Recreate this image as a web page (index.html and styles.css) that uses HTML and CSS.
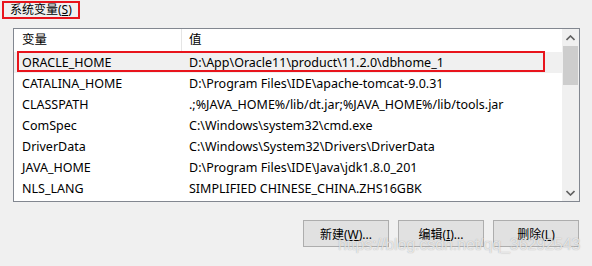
FILE: index.html
```html
<!DOCTYPE html>
<html lang="zh-CN">
<head>
    <meta charset="UTF-8">
    <title>系统变量</title>
    <link rel="stylesheet" href="styles.css">
</head>
<body>
    <div class="panel">
        <div class="group-title"><span class="title-box">系统变量(<u>S</u>)</span></div>
        <div class="list-box">
            <div class="list-body">
                <div class="list-head">
                    <div class="col-name">变量</div>
                    <div class="col-value">值</div>
                </div>
                <div class="row selected">
                    <div class="col-name">ORACLE_HOME</div>
                    <div class="col-value">D:\App\Oracle11\product\11.2.0\dbhome_1</div>
                </div>
                <div class="row">
                    <div class="col-name">CATALINA_HOME</div>
                    <div class="col-value">D:\Program Files\IDE\apache-tomcat-9.0.31</div>
                </div>
                <div class="row">
                    <div class="col-name">CLASSPATH</div>
                    <div class="col-value">.;%JAVA_HOME%/lib/dt.jar;%JAVA_HOME%/lib/tools.jar</div>
                </div>
                <div class="row">
                    <div class="col-name">ComSpec</div>
                    <div class="col-value">C:\Windows\system32\cmd.exe</div>
                </div>
                <div class="row">
                    <div class="col-name">DriverData</div>
                    <div class="col-value">C:\Windows\System32\Drivers\DriverData</div>
                </div>
                <div class="row">
                    <div class="col-name">JAVA_HOME</div>
                    <div class="col-value">D:\Program Files\IDE\Java\jdk1.8.0_201</div>
                </div>
                <div class="row">
                    <div class="col-name">NLS_LANG</div>
                    <div class="col-value">SIMPLIFIED CHINESE_CHINA.ZHS16GBK</div>
                </div>
            </div>
            <div class="scrollbar">
                <div class="arrow">
                    <svg width="9" height="6" viewBox="0 0 9 6"><path d="M0.5 5 L4.5 1 L8.5 5" fill="none" stroke="#606060" stroke-width="1.6"/></svg>
                </div>
                <div class="track">
                    <div class="thumb"></div>
                </div>
                <div class="arrow">
                    <svg width="9" height="6" viewBox="0 0 9 6"><path d="M0.5 1 L4.5 5 L8.5 1" fill="none" stroke="#606060" stroke-width="1.6"/></svg>
                </div>
            </div>
        </div>
        <div class="buttons">
            <button class="btn">新建(<u>W</u>)...</button>
            <button class="btn">编辑(<u>I</u>)...</button>
            <button class="btn">删除(<u>L</u>)</button>
        </div>
        <div class="watermark">https://blog.csdn.net/qq_36292543</div>
    </div>
</body>
</html>
```

FILE: styles.css
```css
body {
    margin: 0;
    padding: 0;
    background-color: #f0f0f0;
    font-family: "Noto Sans", "Noto Sans CJK SC", sans-serif;
    font-size: 12px;
    color: #000;
}
.panel {
    position: relative;
    width: 592px;
    height: 266px;
    padding: 1px 0 0 0;
    box-sizing: border-box;
    overflow: hidden;
}
.group-title {
    padding-left: 2px;
    height: 27px;
}
.title-box {
    display: inline-block;
    border: 2px solid #e8141c;
    padding: 0 6px 0 6px;
    height: 14px;
    line-height: 14px;
    font-size: 12px;
}
.title-box u {
    text-underline-offset: 1px;
}
.list-box {
    display: flex;
    margin-left: 13px;
    width: 567px;
    height: 174px;
    box-sizing: border-box;
    border: 1px solid #828790;
    background-color: #fff;
}
.list-body {
    flex: 1;
    overflow: hidden;
    font-size: 12.5px;
}
.list-head, .row {
    display: flex;
    white-space: nowrap;
}
.list-head {
    height: 23px;
    line-height: 22px;
}
.list-head .col-name {
    border-right: 1px solid #e5e5e5;
}
.row {
    position: relative;
    height: 21px;
    line-height: 21px;
}
.col-name {
    width: 168px;
    padding-left: 8px;
    box-sizing: border-box;
}
.col-value {
    padding-left: 7px;
}
.row.selected {
    background-color: #f0f0f0;
}
.row.selected::after {
    content: "";
    position: absolute;
    left: 3px;
    top: -1px;
    width: 528px;
    height: 21px;
    box-sizing: border-box;
    border: 2px solid #e8141c;
}
.scrollbar {
    width: 17px;
    display: flex;
    flex-direction: column;
    background-color: #f0f0f0;
}
.arrow {
    height: 17px;
    display: flex;
    align-items: center;
    justify-content: center;
}
.track {
    flex: 1;
}
.thumb {
    margin: 0 1px;
    height: 39px;
    background-color: #cdcdcd;
}
.buttons {
    display: flex;
    justify-content: flex-end;
    gap: 9px;
    padding: 18px 13px 0 0;
}
.btn {
    width: 86px;
    height: 27px;
    padding: 0;
    border: 1px solid #adadad;
    background-color: #e1e1e1;
    font-family: "Noto Sans", "Noto Sans CJK SC", sans-serif;
    font-size: 12px;
    color: #000;
}
.watermark {
    position: absolute;
    left: 338px;
    top: 236px;
    font-family: "Liberation Sans", sans-serif;
    font-size: 16px;
    letter-spacing: -0.1px;
    color: rgba(255, 255, 255, 0.7);
    text-shadow: 0 0 1px rgba(110, 110, 110, 0.6);
    pointer-events: none;
}
```
